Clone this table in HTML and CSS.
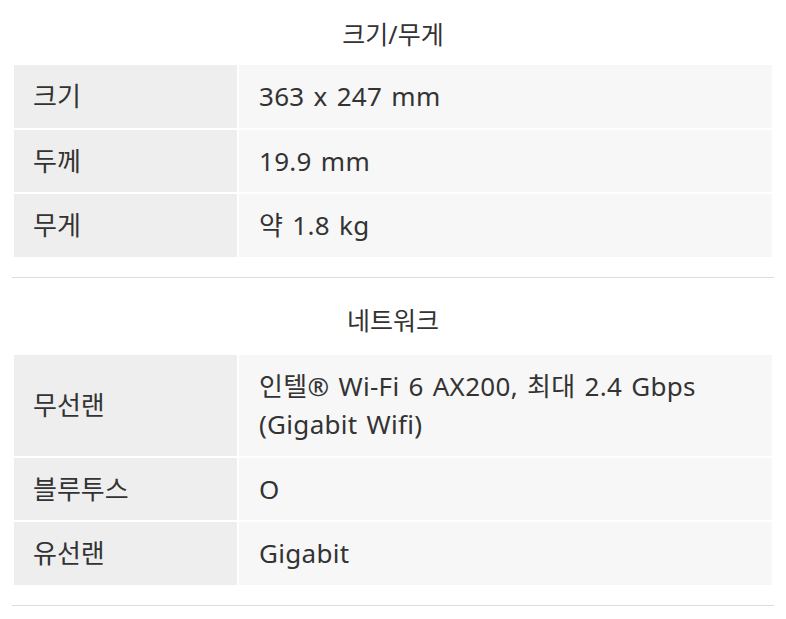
FILE: index.html
```html
<!DOCTYPE html>
<html lang="ko">
<head>
<meta charset="utf-8">
<title>스펙</title>
<link rel="stylesheet" href="styles.css">
</head>
<body>
<div class="specs">
  <section class="spec-section spec-section--first">
    <h2 class="spec-title">크기/무게</h2>
    <div class="spec-table">
      <div class="spec-row"><div class="spec-label">크기</div><div class="spec-value">363 x 247 mm</div></div>
      <div class="spec-row"><div class="spec-label">두께</div><div class="spec-value">19.9 mm</div></div>
      <div class="spec-row"><div class="spec-label">무게</div><div class="spec-value">약 1.8 kg</div></div>
    </div>
    <hr class="spec-rule">
  </section>
  <section class="spec-section">
    <h2 class="spec-title">네트워크</h2>
    <div class="spec-table">
      <div class="spec-row"><div class="spec-label">무선랜</div><div class="spec-value">인텔® Wi-Fi 6 AX200, 최대 2.4 Gbps<br>(Gigabit Wifi)</div></div>
      <div class="spec-row"><div class="spec-label">블루투스</div><div class="spec-value">O</div></div>
      <div class="spec-row"><div class="spec-label">유선랜</div><div class="spec-value">Gigabit</div></div>
    </div>
    <hr class="spec-rule">
  </section>
</div>
</body>
</html>
```
FILE: styles.css
```css
* { box-sizing: border-box; }
html, body { margin: 0; padding: 0; background: #ffffff; }
body {
  font-family: "Noto Sans", "Noto Sans CJK KR", sans-serif;
  color: #333333;
}
.specs {
  padding: 0 14px;
}
.spec-section {
  padding-top: 23px;
}
.spec-section--first {
  padding-top: 15px;
}
.spec-title {
  margin: 0 0 16px;
  font-size: 25px;
  font-weight: 400;
  line-height: 38px;
  text-align: center;
  color: #333333;
}
.spec-section--first .spec-title {
  margin-bottom: 12px;
}
.spec-table {
  display: flex;
  flex-direction: column;
  gap: 2px;
}
.spec-row {
  display: grid;
  grid-template-columns: 223px 1fr;
  column-gap: 2px;
}
.spec-label,
.spec-value {
  display: flex;
  align-items: center;
  padding: 12px 19px;
  font-size: 26px;
  line-height: 38.5px;
  color: #333333;
}
.spec-label {
  background: #eeeeee;
}
.spec-value {
  display: block;
  align-self: stretch;
  padding-left: 20px;
  word-spacing: 2px;
  letter-spacing: 0.3px;
  background: #f7f7f7;
}
.spec-rule {
  margin: 20px -2px 0;
  border: 0;
  border-top: 1px solid #dddddd;
  height: 0;
}
```
